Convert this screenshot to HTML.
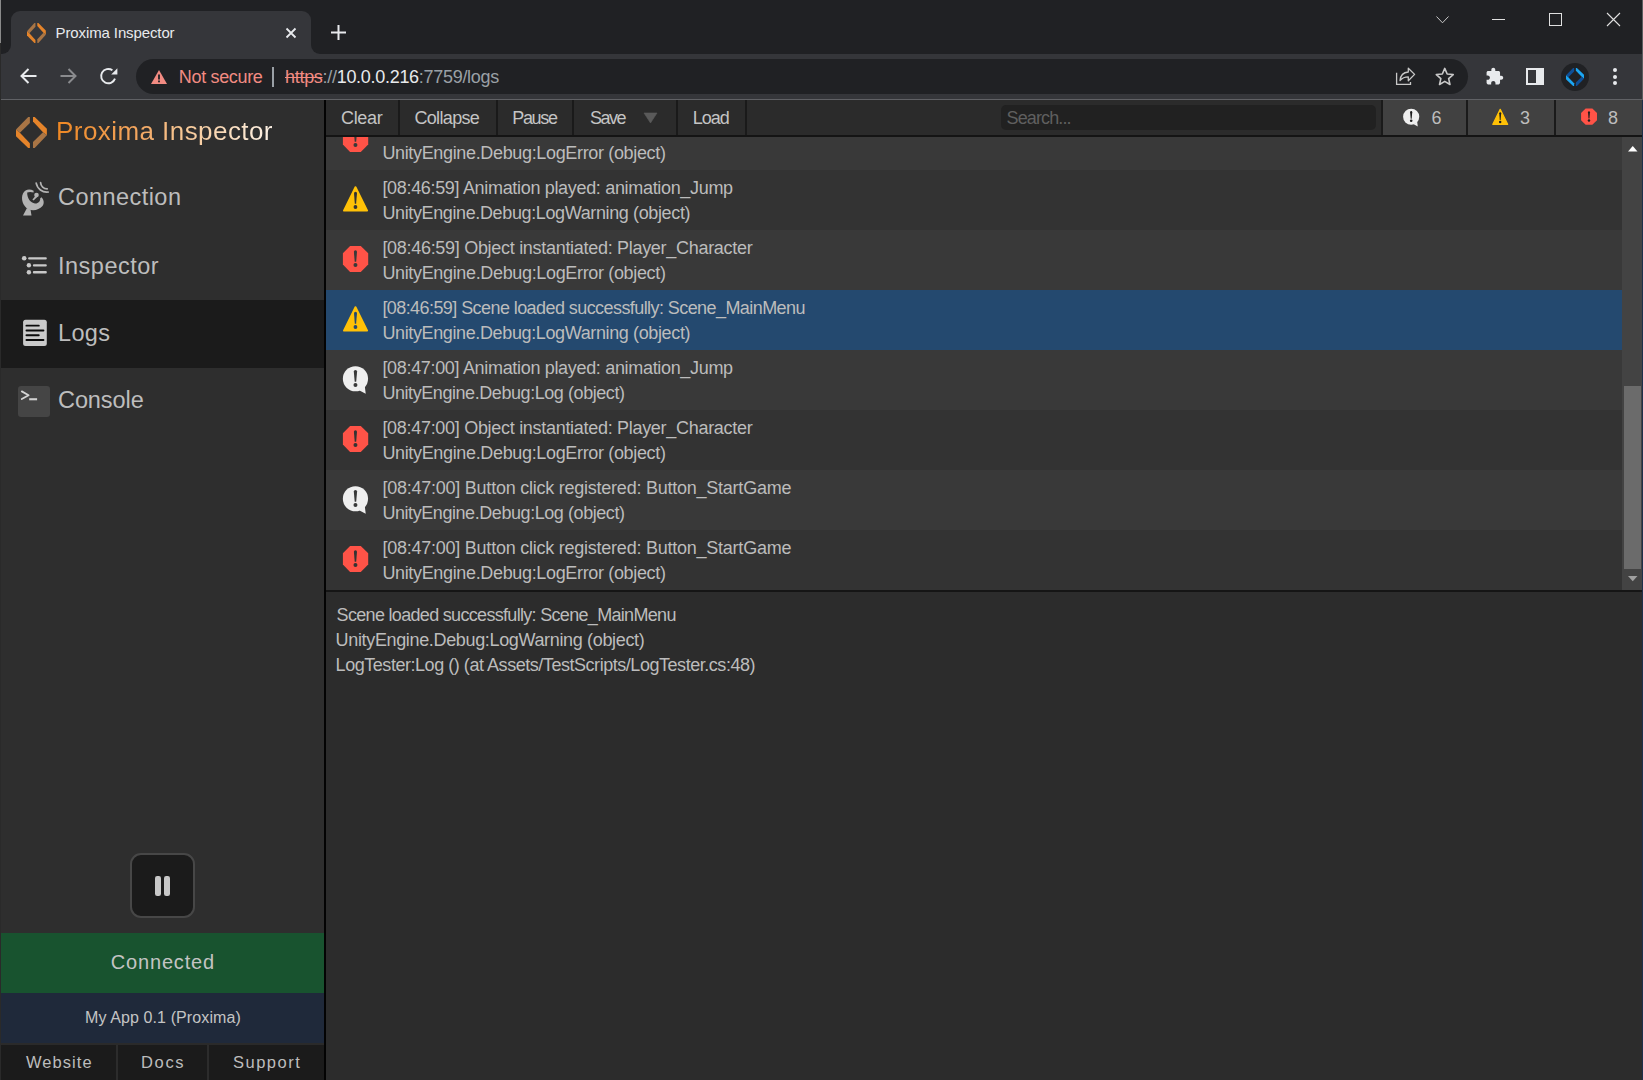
<!DOCTYPE html>
<html><head><meta charset="utf-8">
<style>
*{margin:0;padding:0;box-sizing:border-box}
html,body{width:1643px;height:1080px;overflow:hidden;background:#202124;font-family:"Liberation Sans",sans-serif}
.a{position:absolute}
.t{position:absolute;white-space:nowrap;line-height:1}
svg{position:absolute;overflow:visible}
.row{position:absolute;left:326px;width:1296px;height:60px}
.sep{position:absolute;top:100px;width:2px;height:35px;background:#1a1a1a}
</style></head><body>

<div class="a" style="left:0;top:0;width:1px;height:43px;background:#8a8a8a"></div>
<div class="a" style="left:11px;top:11px;width:300px;height:43px;background:#35363a;border-radius:9px 9px 0 0"></div>
<div class="a" style="left:2px;top:45px;width:9px;height:9px;background:#35363a"></div>
<div class="a" style="left:2px;top:45px;width:9px;height:9px;background:#202124;border-bottom-right-radius:9px"></div>
<div class="a" style="left:311px;top:45px;width:9px;height:9px;background:#35363a"></div>
<div class="a" style="left:311px;top:45px;width:9px;height:9px;background:#202124;border-bottom-left-radius:9px"></div>
<svg style="left:26.6px;top:22.9px" width="18.8" height="20" viewBox="0 0 30.9 30.9" preserveAspectRatio="none"><polygon points="12.2,0 13.9,0 13.9,5.9 3.9,15.7 0,12.6" fill="#a97545"/>
  <polygon points="0,12.6 3.9,15.7 13.9,26.3 13.9,30.9 12.2,30.9 0,19.2" fill="#e5842a"/>
  <polygon points="30.9,18.3 27,15.2 17,4.6 17,0 18.7,0 30.9,11.7" fill="#e5842a"/>
  <polygon points="18.7,30.9 17,30.9 17,25 27,15.2 30.9,18.3" fill="#a97545"/></svg>
<svg style="left:286px;top:28px" width="10" height="10" viewBox="0 0 10 10"><path d="M0.5 0.5L9.5 9.5M9.5 0.5L0.5 9.5" stroke="#e8eaed" stroke-width="1.8"/></svg>
<svg style="left:331px;top:25px" width="15" height="15" viewBox="0 0 15 15"><path d="M7.5 0V15M0 7.5H15" stroke="#e8eaed" stroke-width="2"/></svg>
<svg style="left:1436px;top:16px" width="13" height="8" viewBox="0 0 13 8"><path d="M0.5 0.5L6.5 6.8L12.5 0.5" stroke="#c8c8c8" stroke-width="1" fill="none"/></svg>
<div class="a" style="left:1492px;top:19px;width:13px;height:1px;background:#e0e0e0"></div>
<div class="a" style="left:1549px;top:13px;width:13px;height:13px;border:1px solid #e0e0e0"></div>
<svg style="left:1607px;top:13px" width="13" height="13" viewBox="0 0 13 13"><path d="M0 0L13 13M13 0L0 13" stroke="#e0e0e0" stroke-width="1.1"/></svg>
<div class="a" style="left:0;top:54px;width:1643px;height:45px;background:#35363a"></div>
<div class="a" style="left:0;top:99px;width:1643px;height:1px;background:#606165"></div>
<svg style="left:20px;top:68px" width="17" height="16" viewBox="0 0 17 16"><path d="M16.5 8H1.5M8.5 1L1.5 8L8.5 15" stroke="#e8eaed" stroke-width="2" fill="none"/></svg>
<svg style="left:60px;top:68px" width="17" height="16" viewBox="0 0 17 16"><path d="M0.5 8H15.5M8.5 1L15.5 8L8.5 15" stroke="#8a8b8e" stroke-width="2" fill="none"/></svg>
<svg style="left:0;top:0" width="130" height="95"><path d="M115 78.6A7.15 7.15 0 1 1 112.4 70.3" stroke="#e8eaed" stroke-width="1.9" fill="none"/><polygon points="111.2,74.5 117.4,74.5 117.4,68.2" fill="#e8eaed"/></svg>
<div class="a" style="left:136px;top:59px;width:1332px;height:35px;background:#202124;border-radius:18px"></div>
<svg style="left:151px;top:70px" width="16" height="14" viewBox="0 0 16 14"><polygon points="8,0 16,14 0,14" fill="#f28b82"/><rect x="7.1" y="4.5" width="1.8" height="5" fill="#202124"/><rect x="7.1" y="10.5" width="1.8" height="1.8" fill="#202124"/></svg>
<div class="a" style="left:272px;top:67px;width:2px;height:20px;background:#9aa0a6"></div>
<svg style="left:0;top:0" width="1470" height="95"><path d="M1396.6 72.7V84.4H1410.5V82" stroke="#c8c8c8" stroke-width="1.3" fill="none"/><path d="M1400 80.5C1400.5 75.5 1403.5 72.3 1408.3 72V68.2L1414.6 74.4L1408.3 80.8V76.9C1404.5 76.9 1402 78.2 1400 80.5Z" stroke="#c8c8c8" stroke-width="1.3" fill="none" stroke-linejoin="round"/></svg>
<svg style="left:0;top:0" width="1470" height="95"><polygon points="1444.75,68.40 1447.16,73.98 1453.21,74.55 1448.65,78.57 1449.98,84.50 1444.75,81.40 1439.52,84.50 1440.85,78.57 1436.29,74.55 1442.34,73.98" stroke="#c8c8c8" stroke-width="1.6" fill="none" stroke-linejoin="round"/></svg>
<svg style="left:1485px;top:67px" width="19" height="19" viewBox="0 0 24 24"><path d="M20.5 11H19V7c0-1.1-.9-2-2-2h-4V3.5C13 2.12 11.880 1 10.5 1S8 2.12 8 3.5V5H4c-1.1 0-2 .9-2 2v3.8h1.5c1.5 0 2.7 1.2 2.7 2.7S5 16.200 3.5 16.2H2V20c0 1.1.9 2 2 2h3.8v-1.5c0-1.5 1.2-2.7 2.7-2.7s2.7 1.2 2.7 2.7V22H17c1.1 0 2-.9 2-2v-4h1.5c1.38 0 2.5-1.12 2.5-2.5S21.88 11 20.5 11z" fill="#e8eaed"/></svg>
<div class="a" style="left:1526px;top:68px;width:18px;height:17px;border:2px solid #e8eaed"></div>
<div class="a" style="left:1536px;top:68px;width:8px;height:17px;background:#e8eaed"></div>
<div class="a" style="left:1561px;top:63px;width:28px;height:28px;border-radius:50%;background:#202124"></div>
<svg style="left:1566px;top:68px" width="18" height="18" viewBox="0 0 30.9 30.9"><polygon points="12.2,0 13.9,0 13.9,5.9 3.9,15.7 0,12.6" fill="#0f4f96"/>
  <polygon points="0,12.6 3.9,15.7 13.9,26.3 13.9,30.9 12.2,30.9 0,19.2" fill="#1ba6f3"/>
  <polygon points="30.9,18.3 27,15.2 17,4.6 17,0 18.7,0 30.9,11.7" fill="#1ba6f3"/>
  <polygon points="18.7,30.9 17,30.9 17,25 27,15.2 30.9,18.3" fill="#0f4f96"/></svg>
<div class="a" style="left:1612.5px;top:68px;width:4px;height:4px;border-radius:50%;background:#e8eaed"></div>
<div class="a" style="left:1612.5px;top:74.5px;width:4px;height:4px;border-radius:50%;background:#e8eaed"></div>
<div class="a" style="left:1612.5px;top:81px;width:4px;height:4px;border-radius:50%;background:#e8eaed"></div>
<div class="a" style="left:0;top:100px;width:1643px;height:980px;background:#2c2c2c"></div>
<div class="a" style="left:0;top:100px;width:324px;height:980px;background:#2e2e2e"></div>
<div class="a" style="left:324px;top:100px;width:2px;height:980px;background:#030303"></div>
<svg style="left:16.1px;top:116.9px" width="30.9" height="30.9" viewBox="0 0 30.9 30.9"><polygon points="12.2,0 13.9,0 13.9,5.9 3.9,15.7 0,12.6" fill="#a97545"/>
  <polygon points="0,12.6 3.9,15.7 13.9,26.3 13.9,30.9 12.2,30.9 0,19.2" fill="#e5842a"/>
  <polygon points="30.9,18.3 27,15.2 17,4.6 17,0 18.7,0 30.9,11.7" fill="#e5842a"/>
  <polygon points="18.7,30.9 17,30.9 17,25 27,15.2 30.9,18.3" fill="#a97545"/></svg>
<div class="a" style="left:0;top:300px;width:324px;height:68px;background:#1b1b1b"></div>
<svg style="left:16px;top:178px" width="40" height="40" viewBox="0 0 40 40">
  <path d="M17.6 12.8C14 10.5 9 11 7 15.5C4.5 21 7 28 12 31C17 33.5 23 32 26.5 28C28.5 25.5 28 21.5 25.5 19.2L24.2 20.3C24.5 23.5 22 25.8 19 25.5C14.5 25 11 20 11.2 14.5C13 13.6 15.5 13.8 17.6 14.4Z" fill="#b3b3b3"/>
  <path d="M11 30L7 37.5H15.5L14.5 31.5Z" fill="#b3b3b3"/>
  <circle cx="20.5" cy="17" r="2.3" fill="#b3b3b3"/><path d="M19.6 17.8L16.4 21.6L17.6 22.6L21.2 19Z" fill="#b3b3b3"/>
  <path d="M24.6 4.6A6.5 6.5 0 0 0 31.2 10.8" stroke="#b3b3b3" stroke-width="1.7" fill="none" stroke-linecap="round"/>
  <path d="M20.2 5.2A10.8 10.8 0 0 0 32.2 14" stroke="#b3b3b3" stroke-width="1.7" fill="none" stroke-linecap="round"/>
</svg>
<svg style="left:0;top:0" width="60" height="300">
  <circle cx="24.2" cy="258.3" r="2.3" fill="#c8c8c8"/><circle cx="28.9" cy="265.3" r="2.2" fill="#c8c8c8"/><circle cx="28.9" cy="272.2" r="2.2" fill="#c8c8c8"/>
  <rect x="28.1" y="257.2" width="18.7" height="2.4" rx="1" fill="#c8c8c8"/><rect x="32.9" y="264.2" width="13.9" height="2.3" rx="1" fill="#c8c8c8"/><rect x="32.9" y="271.1" width="13.9" height="2.4" rx="1" fill="#c8c8c8"/>
</svg>
<svg style="left:0;top:0" width="60" height="360">
  <rect x="23.1" y="319.7" width="23.7" height="26.2" rx="2.5" fill="#cacaca"/>
  <rect x="25.5" y="324.7" width="14.2" height="1.9" rx="0.9" fill="#0a0a0a"/><rect x="25.5" y="329.4" width="18.9" height="2" rx="1" fill="#0a0a0a"/><rect x="25.5" y="334.2" width="14.2" height="2" rx="1" fill="#0a0a0a"/><rect x="25.5" y="339" width="18.9" height="1.9" rx="0.9" fill="#0a0a0a"/>
</svg>
<div class="a" style="left:17.7px;top:385.8px;width:31.9px;height:30.8px;background:#454545;border-radius:3px"></div>
<svg style="left:0;top:0" width="60" height="420"><path d="M21.8 391.4L28.6 395.2L21.8 399" stroke="#d4d4d4" stroke-width="1.8" fill="none" stroke-linecap="round" stroke-linejoin="round"/><rect x="29.2" y="398.2" width="7.9" height="2.1" fill="#d0d0d0"/></svg>
<div class="a" style="left:130px;top:853px;width:65px;height:65px;background:#1b1b1b;border:2px solid #474747;border-radius:11px"></div>
<div class="a" style="left:155px;top:876px;width:6px;height:19.5px;background:#c8c8c8;border-radius:2.2px"></div>
<div class="a" style="left:164px;top:876px;width:6px;height:19.5px;background:#c8c8c8;border-radius:2.2px"></div>
<div class="a" style="left:0;top:933px;width:324px;height:60px;background:#18532f"></div>
<div class="a" style="left:0;top:993px;width:324px;height:50px;background:#1f293a"></div>
<div class="a" style="left:0;top:1043px;width:324px;height:2px;background:#2a2a2a"></div>
<div class="a" style="left:0;top:1045px;width:324px;height:35px;background:#1b1b1b"></div>
<div class="a" style="left:116px;top:1045px;width:2px;height:35px;background:#2c2c2c"></div>
<div class="a" style="left:207px;top:1045px;width:2px;height:35px;background:#2c2c2c"></div>
<div class="a" style="left:326px;top:100px;width:1317px;height:35px;background:#2b2b2b"></div>
<div class="a" style="left:326px;top:135px;width:1317px;height:2px;background:#141414"></div>
<div class="sep" style="left:398px"></div>
<div class="sep" style="left:496px"></div>
<div class="sep" style="left:572px"></div>
<div class="sep" style="left:676px"></div>
<div class="sep" style="left:745px"></div>
<svg style="left:644px;top:113px" width="13" height="10" viewBox="0 0 13 10"><polygon points="0,0 13,0 6.5,10" fill="#5a5a5a" stroke="#5a5a5a" stroke-width="0.6" stroke-linejoin="round"/></svg>
<div class="a" style="left:1001px;top:105px;width:375px;height:25px;background:#212121;border-radius:5px"></div>
<div class="sep" style="left:1381px"></div>
<div class="a" style="left:1383px;top:100px;width:83px;height:35px;background:#414141"></div>
<div class="sep" style="left:1466px"></div>
<div class="a" style="left:1468px;top:100px;width:86px;height:35px;background:#414141"></div>
<div class="sep" style="left:1554px"></div>
<div class="a" style="left:1556px;top:100px;width:87px;height:35px;background:#414141"></div>
<svg width="0" height="0" style="position:absolute"><defs>
  <symbol id="iw" viewBox="0 0 34 34"><polygon points="17.5,5.2 6,28.6 29.1,28.6" fill="#ffc107" stroke="#ffc107" stroke-width="2" stroke-linejoin="round"/><path d="M16 11.2A1.5 1.5 0 0 1 19 11.2L18.1 21.7H16.8Z" fill="currentColor"/><circle cx="17.45" cy="25" r="1.9" fill="currentColor"/></symbol>
  <symbol id="ie" viewBox="0 0 34 34"><polygon points="12.1,3.9 22.8,3.9 30.2,11.2 30.2,22.5 22.8,29.9 12.1,29.9 4.9,22.5 4.9,11.2" fill="#ff5347"/><path d="M15.9 9.8A1.55 1.55 0 0 1 19 9.8L18.2 19.7H16.7Z" fill="currentColor"/><circle cx="17.45" cy="23" r="2" fill="currentColor"/></symbol>
  <symbol id="ii" viewBox="0 0 34 34"><circle cx="17.45" cy="16.75" r="12.6" fill="#efefef"/><polygon points="21.5,28.5 27.7,31.8 26.8,24.5" fill="#efefef"/><path d="M15.8 9.6A1.65 1.65 0 0 1 19.1 9.6L18.2 19.7H16.7Z" fill="currentColor"/><circle cx="17.45" cy="23" r="2" fill="currentColor"/></symbol>
</defs></svg>
<svg style="left:1399.8px;top:106.1px;color:#1e1e1e" width="21.8" height="21.8"><use href="#ii"/></svg>
<svg style="left:1488.8px;top:106.4px;color:#1e1e1e" width="21.8" height="21.8"><use href="#iw"/></svg>
<svg style="left:1577.9px;top:106.3px;color:#1e1e1e" width="21.4" height="21.4"><use href="#ie"/></svg>
<div class="row" style="top:137px;height:33px;background:#393939"></div>
<div class="row" style="top:170px;background:#333333"></div>
<div class="row" style="top:230px;background:#393939"></div>
<div class="row" style="top:290px;background:#24496f"></div>
<div class="row" style="top:350px;background:#393939"></div>
<div class="row" style="top:410px;background:#333333"></div>
<div class="row" style="top:470px;background:#393939"></div>
<div class="row" style="top:530px;background:#333333"></div>
<div class="a" style="left:326px;top:137px;width:60px;height:33px;overflow:hidden"><svg style="left:12px;top:-15px;color:#393939" width="34" height="34"><use href="#ie"/></svg></div>
<svg style="left:338px;top:182px;color:#333333" width="34" height="34"><use href="#iw"/></svg>
<svg style="left:338px;top:242px;color:#393939" width="34" height="34"><use href="#ie"/></svg>
<svg style="left:338px;top:302px;color:#24496f" width="34" height="34"><use href="#iw"/></svg>
<svg style="left:338px;top:362px;color:#393939" width="34" height="34"><use href="#ii"/></svg>
<svg style="left:338px;top:422px;color:#333333" width="34" height="34"><use href="#ie"/></svg>
<svg style="left:338px;top:482px;color:#393939" width="34" height="34"><use href="#ii"/></svg>
<svg style="left:338px;top:542px;color:#333333" width="34" height="34"><use href="#ie"/></svg>
<div class="a" style="left:1622px;top:137px;width:20px;height:453px;background:#434343"></div>
<div class="a" style="left:1624px;top:386px;width:17px;height:183px;background:#6b6b6b"></div>
<svg style="left:1627.8px;top:145.6px" width="9.5" height="5.5" viewBox="0 0 9.5 5.5"><polygon points="4.75,0 9.5,5.5 0,5.5" fill="#ffffff"/></svg>
<svg style="left:1627.7px;top:575.8px" width="9.5" height="5.3" viewBox="0 0 9.5 5.3"><polygon points="0,0 9.5,0 4.75,5.3" fill="#a0a0a0"/></svg>
<div class="a" style="left:326px;top:590px;width:1317px;height:2px;background:#151515"></div>
<div class="a" style="left:0;top:43px;width:1px;height:1037px;background:#2a2a2a"></div>
<div class="a" style="left:1642px;top:0;width:1px;height:100px;background:#5a5d60"></div>
<div class="a" style="left:1642px;top:100px;width:1px;height:980px;background:#1d2f4a"></div>
<div class="t" id="tabtitle" style="left:55.60px;top:25.18px;font-size:15px;color:#e8eaed;letter-spacing:-0.117px;">Proxima Inspector</div>
<div class="t" id="notsec" style="left:178.80px;top:67.76px;font-size:18px;color:#f28b82;letter-spacing:-0.333px;">Not secure</div>
<div class="t" id="url" style="left:285.00px;top:67.76px;font-size:18px;color:#9aa0a6;letter-spacing:-0.294px;"><span style="color:#f28b82;text-decoration:line-through;text-decoration-thickness:1px">https</span>://<span style="color:#e8eaed">10.0.0.216</span>:7759/logs</div>
<div class="t" id="logo" style="left:56.00px;top:117.99px;font-size:26px;color:transparent;letter-spacing:0.438px;background:linear-gradient(90deg,#ee8722 0%,#f3a660 38%,#f7c794 58%,#fdf2e6 100%);-webkit-background-clip:text;background-clip:text;padding-bottom:6px">Proxima Inspector</div>
<div class="t" id="nav1" style="left:58.00px;top:186.01px;font-size:23.5px;color:#bdbdbd;letter-spacing:0.451px;">Connection</div>
<div class="t" id="nav2" style="left:58.00px;top:254.77px;font-size:23.5px;color:#bdbdbd;letter-spacing:0.500px;">Inspector</div>
<div class="t" id="nav3" style="left:58.00px;top:321.57px;font-size:23.5px;color:#bdbdbd;letter-spacing:0.333px;">Logs</div>
<div class="t" id="nav4" style="left:58.00px;top:388.57px;font-size:23.5px;color:#bdbdbd;letter-spacing:-0.083px;">Console</div>
<div class="t" id="connected" style="left:110.80px;top:952.11px;font-size:20px;color:#c4c4c4;letter-spacing:0.825px;">Connected</div>
<div class="t" id="appinfo" style="left:85.00px;top:1010.04px;font-size:16px;color:#c4c4c4;letter-spacing:0.105px;">My App 0.1 (Proxima)</div>
<div class="t" id="web" style="left:26.00px;top:1054.03px;font-size:16.5px;color:#bdbdbd;letter-spacing:1.047px;">Website</div>
<div class="t" id="docs" style="left:141.00px;top:1054.03px;font-size:16.5px;color:#bdbdbd;letter-spacing:1.667px;">Docs</div>
<div class="t" id="support" style="left:233.00px;top:1054.03px;font-size:16.5px;color:#bdbdbd;letter-spacing:1.500px;">Support</div>
<div class="t" id="b_clear" style="left:341.00px;top:108.80px;font-size:18px;color:#c4c4c4;letter-spacing:-0.325px;">Clear</div>
<div class="t" id="b_coll" style="left:414.40px;top:108.80px;font-size:18px;color:#c4c4c4;letter-spacing:-0.651px;">Collapse</div>
<div class="t" id="b_pause" style="left:512.20px;top:108.80px;font-size:18px;color:#c4c4c4;letter-spacing:-1.300px;">Pause</div>
<div class="t" id="b_save" style="left:590.00px;top:108.80px;font-size:18px;color:#c4c4c4;letter-spacing:-1.500px;">Save</div>
<div class="t" id="b_load" style="left:692.80px;top:108.80px;font-size:18px;color:#c4c4c4;letter-spacing:-1.000px;">Load</div>
<div class="t" id="search" style="left:1006.60px;top:108.76px;font-size:18px;color:#5f5f5f;letter-spacing:-0.879px;">Search...</div>
<div class="t" id="c6" style="left:1431.40px;top:108.84px;font-size:18px;color:#bdbdbd;letter-spacing:4.900px;">6</div>
<div class="t" id="c3" style="left:1520.00px;top:108.84px;font-size:18px;color:#bdbdbd;letter-spacing:0.000px;">3</div>
<div class="t" id="c8" style="left:1608.00px;top:108.84px;font-size:18px;color:#bdbdbd;letter-spacing:7.300px;">8</div>
<div class="t" id="r0_2" style="left:382.40px;top:144.42px;font-size:18px;color:#bcbcbc;letter-spacing:-0.342px;">UnityEngine.Debug:LogError (object)</div>
<div class="t" id="r1_1" style="left:382.40px;top:178.76px;font-size:18px;color:#bcbcbc;letter-spacing:-0.322px;">[08:46:59] Animation played: animation_Jump</div>
<div class="t" id="r1_2" style="left:382.40px;top:204.42px;font-size:18px;color:#bcbcbc;letter-spacing:-0.372px;">UnityEngine.Debug:LogWarning (object)</div>
<div class="t" id="r2_1" style="left:382.40px;top:238.76px;font-size:18px;color:#bcbcbc;letter-spacing:-0.297px;">[08:46:59] Object instantiated: Player_Character</div>
<div class="t" id="r2_2" style="left:382.40px;top:264.42px;font-size:18px;color:#bcbcbc;letter-spacing:-0.342px;">UnityEngine.Debug:LogError (object)</div>
<div class="t" id="r3_1" style="left:382.40px;top:298.76px;font-size:18px;color:#bcbcbc;letter-spacing:-0.573px;">[08:46:59] Scene loaded successfully: Scene_MainMenu</div>
<div class="t" id="r3_2" style="left:382.40px;top:324.42px;font-size:18px;color:#bcbcbc;letter-spacing:-0.372px;">UnityEngine.Debug:LogWarning (object)</div>
<div class="t" id="r4_1" style="left:382.40px;top:358.76px;font-size:18px;color:#bcbcbc;letter-spacing:-0.322px;">[08:47:00] Animation played: animation_Jump</div>
<div class="t" id="r4_2" style="left:382.40px;top:384.42px;font-size:18px;color:#bcbcbc;letter-spacing:-0.433px;">UnityEngine.Debug:Log (object)</div>
<div class="t" id="r5_1" style="left:382.40px;top:418.76px;font-size:18px;color:#bcbcbc;letter-spacing:-0.297px;">[08:47:00] Object instantiated: Player_Character</div>
<div class="t" id="r5_2" style="left:382.40px;top:444.42px;font-size:18px;color:#bcbcbc;letter-spacing:-0.342px;">UnityEngine.Debug:LogError (object)</div>
<div class="t" id="r6_1" style="left:382.40px;top:478.76px;font-size:18px;color:#bcbcbc;letter-spacing:-0.239px;">[08:47:00] Button click registered: Button_StartGame</div>
<div class="t" id="r6_2" style="left:382.40px;top:504.42px;font-size:18px;color:#bcbcbc;letter-spacing:-0.433px;">UnityEngine.Debug:Log (object)</div>
<div class="t" id="r7_1" style="left:382.40px;top:538.76px;font-size:18px;color:#bcbcbc;letter-spacing:-0.239px;">[08:47:00] Button click registered: Button_StartGame</div>
<div class="t" id="r7_2" style="left:382.40px;top:564.42px;font-size:18px;color:#bcbcbc;letter-spacing:-0.342px;">UnityEngine.Debug:LogError (object)</div>
<div class="t" id="d1" style="left:336.60px;top:605.84px;font-size:18px;color:#bcbcbc;letter-spacing:-0.685px;">Scene loaded successfully: Scene_MainMenu</div>
<div class="t" id="d2" style="left:335.60px;top:630.88px;font-size:18px;color:#bcbcbc;letter-spacing:-0.345px;">UnityEngine.Debug:LogWarning (object)</div>
<div class="t" id="d3" style="left:335.60px;top:655.88px;font-size:18px;color:#bcbcbc;letter-spacing:-0.459px;">LogTester:Log () (at Assets/TestScripts/LogTester.cs:48)</div>
</body></html>
